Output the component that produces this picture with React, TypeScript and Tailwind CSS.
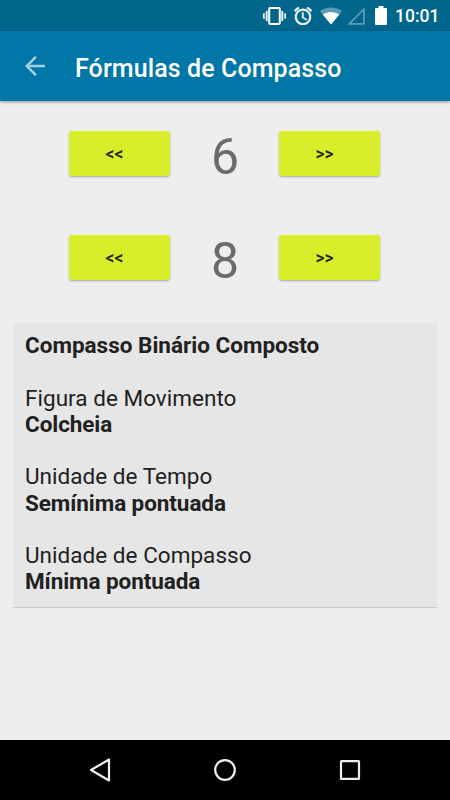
import clsx from 'clsx';

type StepButtonProps = {
  label: string;
};

type TimeSignatureRowProps = {
  value: number;
  className?: string;
};

const DETAILS = [
  { label: 'Figura de Movimento', value: 'Colcheia' },
  { label: 'Unidade de Tempo', value: 'Semínima pontuada' },
  { label: 'Unidade de Compasso', value: 'Mínima pontuada' },
];

const VibrateIcon = () => (
  <svg className="ml-[263px] h-[18px] w-[23px]" viewBox="0 0 23 18" fill="none" stroke="white">
    <rect x="6.2" y="1.1" width="10.6" height="15.8" rx="0.8" strokeWidth="2" />
    <path d="M3.7 4v10M19.3 4v10" strokeWidth="1.8" />
    <path d="M.9 6.2v5.6M22.1 6.2v5.6" strokeWidth="1.6" />
  </svg>
);

const AlarmIcon = () => (
  <svg className="ml-[8px] h-[18px] w-[18px]" viewBox="2 2 20 20" fill="white" stroke="white" strokeWidth="0.4">
    <path d="M22 5.72l-4.6-3.86-1.29 1.53 4.6 3.86L22 5.72zM7.88 3.39L6.6 1.86 2 5.71l1.29 1.53 4.59-3.85zM12.5 8H11v6l4.75 2.85.75-1.23-4-2.37V8zM12 4c-4.97 0-9 4.03-9 9s4.02 9 9 9a9 9 0 0 0 0-18zm0 16c-3.87 0-7-3.13-7-7s3.13-7 7-7 7 3.13 7 7-3.13 7-7 7z" />
  </svg>
);

const WifiIcon = () => (
  <svg className="ml-[8px] h-[18px] w-[22px]" viewBox="0 0 22 18" fill="white">
    <path d="M11 17.5L0 4.2C3 1.8 6.8.5 11 .5s8 1.3 11 3.7z" opacity="0.35" />
    <path d="M11 17.5L2.7 7.500C5 5.800 8 4.900 11 4.900s6 .9 8.300 2.600z" />
  </svg>
);

const SignalIcon = () => (
  <svg className="ml-[5px] h-[18px] w-[18px]" viewBox="0 0 18 18" fill="none">
    <path d="M2.2 16.9L16.9 2.2v14.7z" stroke="white" strokeOpacity="0.35" strokeWidth="1.8" />
  </svg>
);

const BatteryIcon = () => (
  <svg className="ml-[10px] h-[19px] w-[12px]" viewBox="0 0 12 19" fill="white">
    <path d="M3.5 0h5v2H11a1 1 0 0 1 1 1v15a1 1 0 0 1-1 1H1a1 1 0 0 1-1-1V3a1 1 0 0 1 1-1h2.5z" />
  </svg>
);

const StepButton = ({ label }: StepButtonProps) => (
  <button className="h-[45px] w-[101px] rounded-[3px] bg-[#d9ee2b] pt-[2px] pr-[10px] text-[17.5px] font-medium text-[#212121] shadow-[0_1px_2px_rgba(0,0,0,0.3)]">
    {label}
  </button>
);

const TimeSignatureRow = ({ value, className }: TimeSignatureRowProps) => (
  <div className={clsx('flex h-[45px] items-center pl-[69px]', className)}>
    <StepButton label="<<" />
    <span className="w-[109px] pt-[6px] pl-px text-center text-[50px] leading-[50px] text-[#6b6b6b]">
      {value}
    </span>
    <StepButton label=">>" />
  </div>
);

export default function App() {
  return (
    <div className="flex h-[800px] w-[450px] flex-col overflow-hidden bg-[#eeeeee] font-['Roboto',sans-serif]">
      <div className="flex h-[31px] shrink-0 items-center bg-[#01668c]">
        <VibrateIcon />
        <AlarmIcon />
        <WifiIcon />
        <SignalIcon />
        <BatteryIcon />
        <span className="ml-[8px] pt-px text-[17.5px] leading-[20px] font-medium text-white">10:01</span>
      </div>

      <header className="flex h-[70px] shrink-0 items-center bg-[#0077a6] pl-5 shadow-[0_1px_3px_rgba(0,0,0,0.4)]">
        <svg className="h-[30px] w-[30px]" viewBox="0 0 24 24" fill="#a6cfe0">
          <path d="M20 11H7.83l5.59-5.59L12 4l-8 8 8 8 1.41-1.41L7.83 13H20v-2z" />
        </svg>
        <h1 className="ml-[25px] pt-[5px] text-[25px] leading-[30px] font-medium tracking-[0.1px] text-white">
          Fórmulas de Compasso
        </h1>
      </header>

      <main className="flex-1">
        <TimeSignatureRow value={6} className="mt-[30px]" />
        <TimeSignatureRow value={8} className="mt-[59px]" />

        <section className="mx-[13px] mt-[43px] h-[284px] bg-[#e6e6e6] px-[12px] pt-[9px] text-[22.5px] leading-[26.25px] text-[#212121] shadow-[0_1px_0_#c8c8c8]">
          <p className="font-bold">Compasso Binário Composto</p>
          {DETAILS.map(({ label, value }) => (
            <div key={label} className="mt-[26.25px]">
              <p className="tracking-[0.03px]">{label}</p>
              <p className="font-bold tracking-[-0.08px]">{value}</p>
            </div>
          ))}
        </section>
      </main>

      <nav className="flex h-[60px] shrink-0 items-center justify-between bg-black px-[89px]">
        <svg className="h-[24px] w-[22px]" viewBox="0 0 22 24" fill="none" stroke="#eeeeee" strokeWidth="2.2" strokeLinejoin="round">
          <path d="M20 1.5v21L2 12z" />
        </svg>
        <svg className="h-[22px] w-[22px]" viewBox="0 0 22 22" fill="none" stroke="#eeeeee" strokeWidth="2.2">
          <circle cx="11" cy="11" r="9.8" />
        </svg>
        <svg className="h-[20px] w-[22px]" viewBox="0 0 22 20" fill="none" stroke="#eeeeee" strokeWidth="2.2">
          <rect x="2" y="1.1" width="18" height="17.8" rx="0.5" />
        </svg>
      </nav>
    </div>
  );
}
